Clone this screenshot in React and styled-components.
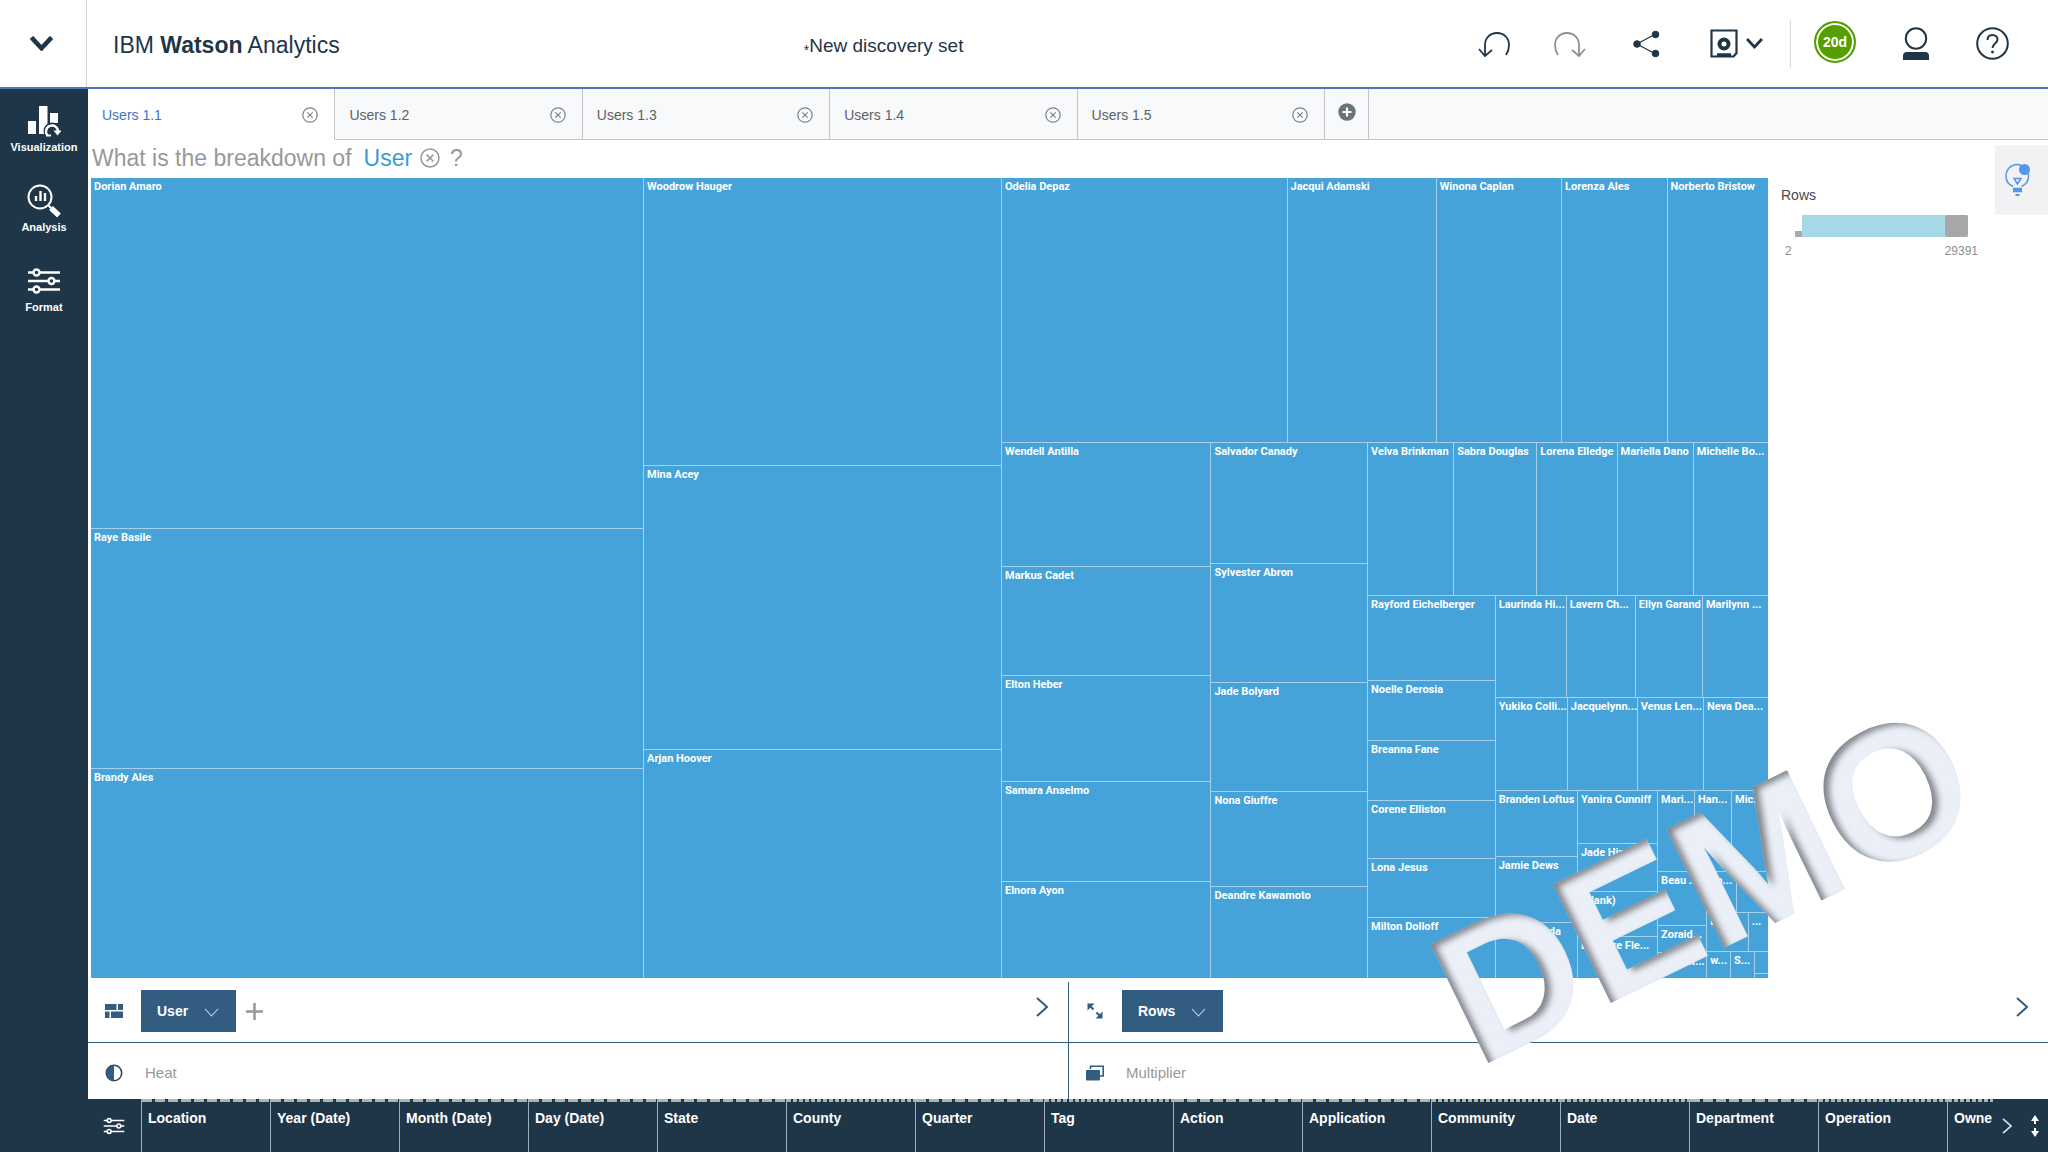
import React from "react";
import styled, { createGlobalStyle } from "styled-components";

const color = {
  ink: "#1f3548",
  accent: "#4c78b8",
  steel: "#325c80",
  tile: "#45a3d9",
  tileLine: "#a4d2ee",
  grey: "#98989b",
  line: "#c4c5c8",
};

const GlobalStyle = createGlobalStyle`
  *, *::before, *::after { box-sizing: border-box; }
  html, body, #root { height: 100%; }
  body {
    margin: 0;
    background: #fff;
    color: ${color.ink};
    font-family: "Liberation Sans", Arial, Helvetica, sans-serif;
    font-size: 14px;
    line-height: 16px;
    overflow: hidden;
  }
  button, input { font: inherit; color: inherit; margin: 0; }
  button { padding: 0; border: 0; background: none; cursor: pointer; }
  svg { display: block; flex: none; }
`;

const Page = styled.div`
  position: relative;
  display: flex;
  flex-direction: column;
  height: 100vh;
  overflow: hidden;
`;

/* ---------- header ---------- */

const Header = styled.header`
  display: grid;
  grid-template-columns: 87px 35% 1fr auto;
  align-items: center;
  height: 89px;
  border-bottom: 2px solid ${color.accent};
`;

const MenuButton = styled.button`
  display: flex;
  align-items: center;
  justify-content: center;
  align-self: stretch;
  border-right: 1px solid #d3d5d8;
  padding-right: 4px;
`;

const Brand = styled.h1`
  margin: 0;
  padding: 2px 0 0 26px;
  font-size: 23px;
  line-height: 28px;
  font-weight: 400;
`;

const DocumentName = styled.div`
  display: flex;
  align-items: center;
  padding-top: 5px;
  font-size: 19px;
  line-height: 24px;
`;

const Unsaved = styled.span`
  padding-top: 8px;
  font-size: 14px;
`;

const Actions = styled.div`
  display: flex;
  align-items: center;
  padding-right: 40px;
`;

const ActionGroup = styled.div`
  display: flex;
  align-items: center;
  gap: 44px;
`;

const ActionButton = styled.button`
  display: flex;
  align-items: center;
  justify-content: center;
  gap: 8px;
  width: ${(p) => (p.$wide ? 60 : 32)}px;
  height: 40px;
  color: ${(p) => (p.$muted ? "#8a9299" : color.ink)};
`;

const Divider = styled.span`
  width: 1px;
  height: 48px;
  margin: 0 23px 0 24px;
  background: #d9dadd;
`;

const Badge = styled.button`
  display: flex;
  align-items: center;
  justify-content: center;
  width: 42px;
  height: 42px;
  margin-bottom: 4px;
  border: 2px solid #55a000;
  border-radius: 50%;
  background: #55a000;
  box-shadow: inset 0 0 0 2px #fff;
  color: #fff;
  font-size: 14px;
  font-weight: 700;
`;

/* ---------- body ---------- */

const Body = styled.div`
  display: flex;
  flex: 1;
  min-height: 0;
`;

const Sidebar = styled.nav`
  display: flex;
  flex-direction: column;
  flex: none;
  width: 88px;
  padding-top: 15px;
  gap: 10px;
  background: ${color.ink};
`;

const SideItem = styled.button`
  display: flex;
  flex-direction: column;
  align-items: center;
  height: 70px;
  gap: 3px;
  color: #fff;
  font-size: 11px;
  font-weight: 700;
  line-height: 12px;
`;

const Main = styled.main`
  display: flex;
  flex-direction: column;
  flex: 1;
  min-width: 0;
`;

const TabBar = styled.div`
  display: flex;
  flex: none;
  height: 51px;
  background: #f8f9fb;
`;

const TabList = styled.div`
  display: grid;
  grid-template-columns: repeat(5, 1fr);
  flex: 0 1 1237px;
`;

const Tab = styled.div`
  display: flex;
  align-items: center;
  justify-content: space-between;
  padding: 2px 16px 0 14px;
  border-right: 1px solid ${color.line};
  border-bottom: 1px solid ${(p) => (p.$active ? "#fff" : color.line)};
  background: ${(p) => (p.$active ? "#fff" : "transparent")};
`;

const TabLabel = styled.button`
  color: ${(p) => (p.$active ? "#3b76c9" : "#5d6266")};
`;

const AddTab = styled.button`
  display: flex;
  align-items: center;
  justify-content: center;
  width: 44px;
  padding-bottom: 4px;
  border-right: 1px solid ${color.line};
  border-bottom: 1px solid ${color.line};
`;

const TabRest = styled.div`
  flex: 1;
  border-bottom: 1px solid ${color.line};
`;

const CloseButton = styled.button`
  display: flex;
  color: ${(p) => (p.$light ? color.grey : "#7d8286")};
`;

const Workspace = styled.section`
  display: grid;
  grid-template-columns: minmax(0, 1fr) 280px;
  flex: 1;
  min-height: 0;
`;

const ChartColumn = styled.div`
  display: flex;
  flex-direction: column;
  min-width: 0;
`;

const Question = styled.h2`
  display: flex;
  align-items: center;
  flex: none;
  height: 38px;
  margin: 0;
  padding: 0 0 2px 4px;
  color: ${color.grey};
  font-size: 23px;
  line-height: 28px;
  font-weight: 400;
`;

const QuestionField = styled.button`
  margin: 0 8px 0 12px;
  color: #3b9bd3;
`;

const QuestionMark = styled.span`
  padding-left: 10px;
`;

const Treemap = styled.div`
  display: flex;
  flex: 1;
  min-height: 0;
  margin-left: 3px;
`;

const Split = styled.div`
  display: flex;
  flex-direction: ${(p) => p.$direction};
  flex: ${(p) => p.$weight} 1 0;
  gap: 1px;
  min-width: 0;
  min-height: 0;
  background: ${color.tileLine};
`;

const Tile = styled.div`
  flex: ${(p) => p.$weight} 1 0;
  min-width: 0;
  min-height: 0;
  overflow: hidden;
  background: ${color.tile};
`;

const TileLabel = styled.div`
  padding: 2px 0 0 3px;
  color: #fff;
  font-family: Roboto, "Liberation Sans", sans-serif;
  font-size: 11px;
  font-weight: 700;
  line-height: 14px;
  white-space: nowrap;
`;

/* ---------- legend ---------- */

const LegendColumn = styled.aside`
  display: flex;
  align-items: flex-start;
  justify-content: space-between;
  padding-left: 13px;
`;

const Legend = styled.div`
  width: 197px;
  padding-top: 47px;
`;

const LegendTitle = styled.label`
  display: block;
  color: #45494d;
`;

const SliderRow = styled.div`
  display: flex;
  align-items: flex-end;
  padding: 12px 10px 0 14px;
`;

const LowHandle = styled.span`
  width: 7px;
  height: 6px;
  background: #a9a9ac;
`;

const RangeInput = styled.input`
  flex: 1;
  min-width: 0;
  height: 22px;
  appearance: none;
  background: #a6d9e7;

  &::-webkit-slider-thumb {
    appearance: none;
    width: 23px;
    height: 22px;
    border-radius: 3px;
    background: #a7a7aa;
  }
`;

const Bounds = styled.div`
  display: flex;
  justify-content: space-between;
  padding: 6px 0 0 4px;
  color: #8e8f92;
  font-size: 12px;
`;

const InsightButton = styled.button`
  display: flex;
  align-items: center;
  width: 53px;
  height: 70px;
  margin-top: 5px;
  padding-left: 10px;
  background: #f2f2f5;
`;

/* ---------- shelves ---------- */

const Shelves = styled.section`
  display: grid;
  grid-template-columns: 1fr 1fr;
  flex: none;
  margin-top: 4px;
`;

const Shelf = styled.div`
  display: flex;
  align-items: center;
  height: ${(p) => (p.$lower ? 56 : 61)}px;
  padding: ${(p) => (p.$lower ? "4px 20px 0 17px" : "0 20px 2px 17px")};
  border-bottom: ${(p) => (p.$lower ? "0" : `1px solid ${color.steel}`)};
  &:nth-child(even) { border-left: 1px solid ${color.steel}; }
`;

const FieldButton = styled.button`
  display: flex;
  align-items: center;
  gap: 16px;
  height: 42px;
  margin: 0 10px 0 18px;
  padding: 0 17px 0 16px;
  background: ${color.steel};
  color: #fff;
  font-weight: 700;
`;

const FieldCaret = styled.span`
  padding-top: 4px;
`;

const ShelfIconButton = styled.button`
  display: flex;
  margin-left: ${(p) => (p.$end ? "auto" : "0")};
  padding-bottom: ${(p) => (p.$end ? "8px" : "0")};
`;

const ShelfHint = styled.span`
  padding-left: 22px;
  color: ${color.grey};
  font-size: 15px;
`;

/* ---------- data tray ---------- */

const Tray = styled.footer`
  display: flex;
  flex: none;
  height: 53px;
  background: ${color.ink};
  color: #fff;
`;

const TrayButton = styled.button`
  display: flex;
  align-items: center;
  justify-content: center;
  width: ${(p) => p.$width}px;
  padding-right: 2px;
`;

const ColumnList = styled.ul`
  display: flex;
  flex: 1;
  min-width: 0;
  margin: 0;
  padding: 0;
  overflow: hidden;
  list-style: none;
`;

const ColumnItem = styled.li`
  flex: none;
  width: 129px;
  padding: 11px 0 0 6px;
  border-left: 1px solid #9db0be;
  background: ${(p) =>
    p.$dense
      ? "repeating-linear-gradient(90deg, #a9b4b8 0 4px, #1f3548 4px 6px)"
      : "repeating-linear-gradient(90deg, #a9b4b8 0 10px, #1f3548 10px 13px)"}
    0 0 / 100% 3px no-repeat;
  font-weight: 700;
  white-space: nowrap;
`;

/* ---------- watermark ---------- */

const Watermark = styled.div`
  position: absolute;
  right: 5px;
  bottom: 62px;
  filter: url(#emboss);
  pointer-events: none;
`;

const WatermarkText = styled.div`
  color: #ebf0f8;
  font-size: 189px;
  font-weight: 700;
  line-height: 1;
  -webkit-text-stroke: 2px #ebf0f8;
  transform: rotate(-26deg);
  transform-origin: 14px 160px;
`;

const FilterDefs = styled.svg`
  position: absolute;
  width: 0;
  height: 0;
`;

/* ---------- icons ---------- */

const Caret = ({ size = 16, stroke = 3, tint = "currentColor" }) => (
  <svg width={size} height={size * 0.625} viewBox="0 0 16 10" fill="none" stroke={tint} strokeWidth={stroke}>
    <path d="M1 1l7 7.500 7-7.500" />
  </svg>
);

const Chevron = ({ tint, width = 12, height = 20 }) => (
  <svg width={width} height={height} viewBox="0 0 12 20" fill="none" stroke={tint} strokeWidth="2">
    <path d="M1 1l10 9-10 9" />
  </svg>
);

const UndoIcon = ({ flip }) => (
  <svg width="32" height="26" viewBox="0 0 32 26" fill="none" stroke="currentColor" strokeWidth="1.800">
    <g transform={flip ? "translate(32 0) scale(-1 1)" : undefined}>
      <path d="M7 24V14C7 7 12 2 19 2s12 5 12 12c0 4-1 7-3 10" />
      <path d="M1 18l6 7 7-6" />
    </g>
  </svg>
);

const ShareIcon = () => (
  <svg width="27" height="28" viewBox="0 0 27 28" fill={color.ink} stroke={color.ink}>
    <path d="M22.500 4L4 14l18.500 10" fill="none" strokeWidth="1.200" />
    <circle cx="22.500" cy="4.500" r="3.300" />
    <circle cx="4" cy="14" r="3.300" />
    <circle cx="22.500" cy="23.500" r="3.300" />
  </svg>
);

const SaveIcon = () => (
  <svg width="28" height="29" viewBox="0 0 28 29" fill="none" stroke={color.ink}>
    <path d="M1.500 1.500h25V24l-3 3.500h-22z" strokeWidth="2.200" />
    <circle cx="14" cy="15" r="4.500" strokeWidth="4" />
    <path d="M7 26h14" strokeWidth="3.500" />
  </svg>
);

const PersonIcon = () => (
  <svg width="26" height="34" viewBox="0 0 26 34">
    <circle cx="13" cy="11.500" r="10.200" fill="none" stroke={color.ink} strokeWidth="2" />
    <path d="M0 33v-4a4 4 0 0 1 4-4h18a4 4 0 0 1 4 4v4z" fill={color.ink} />
  </svg>
);

const HelpIcon = () => (
  <svg width="33" height="33" viewBox="0 0 33 33" fill="none" stroke={color.ink} strokeWidth="2">
    <circle cx="16.500" cy="16.500" r="15.300" />
    <path d="M11.500 13c0-3 2-5 5-5s5 2 5 4.500c0 4-5 4-5 8.500" />
    <circle cx="16.500" cy="25" r="1" fill={color.ink} strokeWidth="1" />
  </svg>
);

const CloseIcon = ({ size = 16 }) => (
  <svg width={size} height={size} viewBox="0 0 16 16" fill="none" stroke="currentColor" strokeWidth="1.200">
    <circle cx="8" cy="8" r="7.200" />
    <path d="M5.300 5.300l5.400 5.400M10.700 5.300l-5.400 5.400" />
  </svg>
);

const AddIcon = () => (
  <svg width="18" height="18" viewBox="0 0 18 18">
    <circle cx="9" cy="9" r="8.700" fill="#67747a" />
    <path d="M9 4.500v9M4.500 9h9" stroke="#fff" strokeWidth="2.200" />
  </svg>
);

const VisualizationIcon = () => (
  <svg width="34" height="34" viewBox="0 0 34 34">
    <path d="M1 17h8v13H1zM12 2h8.500v28H12zM23 9h8v10h-8z" fill="#fff" />
    <circle cx="25" cy="27" r="8.500" fill={color.ink} />
    <path d="M20.500 31.500a6 6 0 1 1 10.500-4" fill="none" stroke="#fff" strokeWidth="2.400" />
    <path d="M26.500 26.500h8l-4 5z" fill="#fff" />
    <path d="M19 31.500h5" stroke="#fff" strokeWidth="2" />
  </svg>
);

const AnalysisIcon = () => (
  <svg width="34" height="34" viewBox="0 0 34 34" fill="none" stroke="#fff">
    <circle cx="13" cy="13" r="11.500" strokeWidth="2" />
    <path d="M9 17v-5M13.500 17V7M18 17V9" strokeWidth="2.400" />
    <path d="M21.500 21.500l3 3" strokeWidth="2" />
    <path d="M24 24l8 7.500" strokeWidth="5.500" />
  </svg>
);

const SlidersIcon = ({ width = 34, height = 34, back = color.ink }) => (
  <svg width={width} height={height} viewBox="0 3 34 28" fill={back} stroke="#fff" strokeWidth="2.400">
    <path d="M1 8.500h32M1 17h32M1 25.500h32" />
    <circle cx="9.500" cy="8.500" r="3" />
    <circle cx="24.500" cy="17" r="3" />
    <circle cx="9.500" cy="25.500" r="3" />
  </svg>
);

const BulbIcon = () => (
  <svg width="26" height="34" viewBox="0 0 26 34" fill="none" stroke="#5596e6" strokeWidth="1.500">
    <path d="M8 23.500C3.500 21.500 1 17.500 1 13 1 6.500 6 1.500 12 1.500S23.500 6.500 23.500 13c0 4.500-2.500 8.500-7 10.500" />
    <path d="M9 15.500h7l-3.500 5.500z" />
    <path d="M8 27h9" strokeWidth="4.500" />
    <path d="M10.500 32h4" strokeWidth="2" />
    <circle cx="19.500" cy="6.500" r="5.500" fill="#5596e6" stroke="none" />
  </svg>
);

const BricksIcon = () => (
  <svg width="18" height="14" viewBox="0 0 18 14" fill={color.steel}>
    <path d="M0 0h11.500v6H0zM13 0h5v6h-5zM0 7.500h4.500V14H0zM6 7.500h12V14H6z" />
  </svg>
);

const ResizeIcon = () => (
  <svg width="18" height="16" viewBox="0 0 18 16" fill={color.steel} stroke={color.steel}>
    <path d="M1.500.5h7l-2.500 2.500-2 2-2.500 2.500zM16.500 15.500h-7l2.500-2.500 2-2 2.500-2.500z" stroke="none" />
    <path d="M3.500 2.500l4 4M14.500 13.500l-4-4" strokeWidth="2" />
  </svg>
);

const ContrastIcon = () => (
  <svg width="18" height="18" viewBox="0 0 18 18">
    <circle cx="9" cy="9" r="7.700" fill="#fff" stroke="#33475a" strokeWidth="1.600" />
    <path d="M9 1.500a7.500 7.500 0 0 0 0 15z" fill={color.steel} />
  </svg>
);

const CopiesIcon = () => (
  <svg width="18" height="16" viewBox="0 0 18 16">
    <path d="M4.500 4V1.300h12.700V11H14" fill="none" stroke={color.steel} strokeWidth="1.600" />
    <rect x="0" y="5" width="14" height="10.500" rx="1" fill={color.steel} />
  </svg>
);

const PlusIcon = () => (
  <svg width="17" height="17" viewBox="0 0 17 17" stroke={color.grey} strokeWidth="2.500">
    <path d="M8.500 0v17M0 8.500h17" />
  </svg>
);

const ResizeTrayIcon = () => (
  <svg width="8" height="22" viewBox="0 0 8 22" fill="#fff" stroke="#fff">
    <path d="M4 0l4 6H0zM4 22l4-6H0z" stroke="none" />
    <path d="M4 4v5M4 13v5" strokeWidth="2" />
  </svg>
);

/* ---------- data ---------- */

const row = (weight, ...children) => ({ weight, direction: "row", children });
const col = (weight, ...children) => ({ weight, direction: "column", children });
const leaf = (weight, name) => ({ weight, name });

const treemap = row(
  1,
  col(552, leaf(350, "Dorian Amaro"), leaf(240, "Raye Basile"), leaf(209, "Brandy Ales")),
  col(357, leaf(287, "Woodrow Hauger"), leaf(284, "Mina Acey"), leaf(228, "Arjan Hoover")),
  col(
    766,
    row(
      264,
      leaf(286, "Odelia Depaz"),
      leaf(149, "Jacqui Adamski"),
      leaf(125, "Winona Caplan"),
      leaf(105, "Lorenza Ales"),
      leaf(101, "Norberto Bristow")
    ),
    row(
      536,
      col(
        209,
        leaf(124, "Wendell Antilla"),
        leaf(109, "Markus Cadet"),
        leaf(106, "Elton Heber"),
        leaf(100, "Samara Anselmo"),
        leaf(97, "Elnora Ayon")
      ),
      col(
        156,
        leaf(121, "Salvador Canady"),
        leaf(119, "Sylvester Abron"),
        leaf(109, "Jade Bolyard"),
        leaf(95, "Nona Giuffre"),
        leaf(92, "Deandre Kawamoto")
      ),
      col(
        401,
        row(
          153,
          leaf(86, "Velva Brinkman"),
          leaf(83, "Sabra Douglas"),
          leaf(80, "Lorena Elledge"),
          leaf(76, "Mariella Dano"),
          leaf(75, "Michelle Bo...")
        ),
        row(
          383,
          col(
            127,
            leaf(85, "Rayford Eichelberger"),
            leaf(60, "Noelle Derosia"),
            leaf(60, "Breanna Fane"),
            leaf(58, "Corene Elliston"),
            leaf(59, "Lona Jesus"),
            leaf(61, "Milton Dolloff")
          ),
          col(
            273,
            row(
              101,
              leaf(71, "Laurinda Hi..."),
              leaf(69, "Lavern Ch..."),
              leaf(67, "Ellyn Garand"),
              leaf(66, "Marilynn ...")
            ),
            row(
              93,
              leaf(72, "Yukiko Colli..."),
              leaf(70, "Jacquelynn..."),
              leaf(66, "Venus Len..."),
              leaf(65, "Neva Dea...")
            ),
            row(
              188,
              col(82, leaf(66, "Branden Loftus"), leaf(66, "Jamie Dews"), leaf(56, "Gay Miranda")),
              col(
                80,
                leaf(53, "Yanira Cunniff"),
                leaf(48, "Jade Hinson"),
                leaf(45, "(blank)"),
                leaf(42, "Deandre Fle...")
              ),
              col(
                111,
                row(81, leaf(37, "Mari..."), leaf(37, "Han..."), leaf(37, "Mic...")),
                row(
                  107,
                  col(49, leaf(54, "Beau ..."), leaf(27, "Zoraid..."), leaf(26, "Shanel...")),
                  col(
                    62,
                    row(41, leaf(30, "Jo..."), leaf(32, "")),
                    row(39, leaf(42, "La..."), leaf(20, "...")),
                    row(
                      27,
                      leaf(24, "w..."),
                      leaf(24, "S..."),
                      col(14, leaf(23, ""), leaf(4, ""))
                    )
                  )
                )
              )
            )
          )
        )
      )
    )
  )
);

const MapNode = ({ node }) =>
  node.children ? (
    <Split $direction={node.direction} $weight={node.weight}>
      {node.children.map((child, i) => (
        <MapNode key={i} node={child} />
      ))}
    </Split>
  ) : (
    <Tile $weight={node.weight}>{node.name && <TileLabel>{node.name}</TileLabel>}</Tile>
  );

const tabs = ["Users 1.1", "Users 1.2", "Users 1.3", "Users 1.4", "Users 1.5"];

const columns = [
  ["Location"],
  ["Year (Date)"],
  ["Month (Date)"],
  ["Day (Date)"],
  ["State"],
  ["County", true],
  ["Quarter"],
  ["Tag", true],
  ["Action"],
  ["Application"],
  ["Community", true],
  ["Date", true],
  ["Department"],
  ["Operation", true],
  ["Owne", true],
];

const Field = ({ name }) => (
  <FieldButton>
    {name}
    <FieldCaret>
      <Caret size={15} stroke={1.2} tint="#a9cbe6" />
    </FieldCaret>
  </FieldButton>
);

export default function App() {
  return (
    <Page>
      <GlobalStyle />
      <Header>
        <MenuButton aria-label="Menu">
          <Caret size={23} stroke={3.2} />
        </MenuButton>
        <Brand>
          IBM <b>Watson</b> Analytics
        </Brand>
        <DocumentName>
          <Unsaved>*</Unsaved>New discovery set
        </DocumentName>
        <Actions>
          <ActionGroup>
            <ActionButton aria-label="Undo"><UndoIcon /></ActionButton>
            <ActionButton aria-label="Redo" $muted><UndoIcon flip /></ActionButton>
            <ActionButton aria-label="Share"><ShareIcon /></ActionButton>
            <ActionButton aria-label="Save" $wide>
              <SaveIcon />
              <Caret size={17} stroke={2.6} />
            </ActionButton>
          </ActionGroup>
          <Divider />
          <ActionGroup>
            <Badge>20d</Badge>
            <ActionButton aria-label="Account"><PersonIcon /></ActionButton>
            <ActionButton aria-label="Help"><HelpIcon /></ActionButton>
          </ActionGroup>
        </Actions>
      </Header>

      <Body>
        <Sidebar>
          <SideItem><VisualizationIcon />Visualization</SideItem>
          <SideItem><AnalysisIcon />Analysis</SideItem>
          <SideItem><SlidersIcon />Format</SideItem>
        </Sidebar>

        <Main>
          <TabBar>
            <TabList>
              {tabs.map((name, i) => (
                <Tab key={name} $active={i === 0}>
                  <TabLabel $active={i === 0}>{name}</TabLabel>
                  <CloseButton aria-label={`Close ${name}`}><CloseIcon /></CloseButton>
                </Tab>
              ))}
            </TabList>
            <AddTab aria-label="Add tab"><AddIcon /></AddTab>
            <TabRest />
          </TabBar>

          <Workspace>
            <ChartColumn>
              <Question>
                What is the breakdown of
                <QuestionField>User</QuestionField>
                <CloseButton aria-label="Remove User" $light><CloseIcon size={20} /></CloseButton>
                <QuestionMark>?</QuestionMark>
              </Question>
              <Treemap>
                <MapNode node={treemap} />
              </Treemap>
            </ChartColumn>
            <LegendColumn>
              <Legend>
                <LegendTitle htmlFor="rows-range">Rows</LegendTitle>
                <SliderRow>
                  <LowHandle />
                  <RangeInput id="rows-range" type="range" min="2" max="29391" defaultValue="29391" />
                </SliderRow>
                <Bounds>
                  <span>2</span>
                  <span>29391</span>
                </Bounds>
              </Legend>
              <InsightButton aria-label="Insights"><BulbIcon /></InsightButton>
            </LegendColumn>
          </Workspace>

          <Shelves>
            <Shelf>
              <BricksIcon />
              <Field name="User" />
              <ShelfIconButton aria-label="Add field"><PlusIcon /></ShelfIconButton>
              <ShelfIconButton aria-label="More fields" $end><Chevron tint={color.steel} /></ShelfIconButton>
            </Shelf>
            <Shelf>
              <ResizeIcon />
              <Field name="Rows" />
              <ShelfIconButton aria-label="More measures" $end><Chevron tint={color.steel} /></ShelfIconButton>
            </Shelf>
            <Shelf $lower>
              <ContrastIcon />
              <ShelfHint>Heat</ShelfHint>
            </Shelf>
            <Shelf $lower>
              <CopiesIcon />
              <ShelfHint>Multiplier</ShelfHint>
            </Shelf>
          </Shelves>

          <Tray>
            <TrayButton aria-label="Tray settings" $width={53}>
              <SlidersIcon width={22} height={18} />
            </TrayButton>
            <ColumnList>
              {columns.map(([name, dense]) => (
                <ColumnItem key={name} $dense={dense}>{name}</ColumnItem>
              ))}
            </ColumnList>
            <TrayButton aria-label="Scroll columns" $width={30}>
              <Chevron tint="#dfe6eb" width={10} height={16} />
            </TrayButton>
            <TrayButton aria-label="Resize tray" $width={25}>
              <ResizeTrayIcon />
            </TrayButton>
          </Tray>
        </Main>
      </Body>

      <FilterDefs aria-hidden="true">
        <filter id="emboss" x="-20%" y="-120%" width="140%" height="260%" colorInterpolationFilters="sRGB">
          <feGaussianBlur in="SourceAlpha" stdDeviation="3" result="soft" />
          <feOffset in="soft" dx="6" dy="2" result="moved" />
          <feComposite in="SourceAlpha" in2="moved" operator="out" result="edge" />
          <feFlood floodColor="#606166" floodOpacity="0.75" />
          <feComposite in2="edge" operator="in" result="shade" />
          <feMerge>
            <feMergeNode in="SourceGraphic" />
            <feMergeNode in="shade" />
          </feMerge>
        </filter>
      </FilterDefs>
      <Watermark>
        <WatermarkText>DEMO</WatermarkText>
      </Watermark>
    </Page>
  );
}
